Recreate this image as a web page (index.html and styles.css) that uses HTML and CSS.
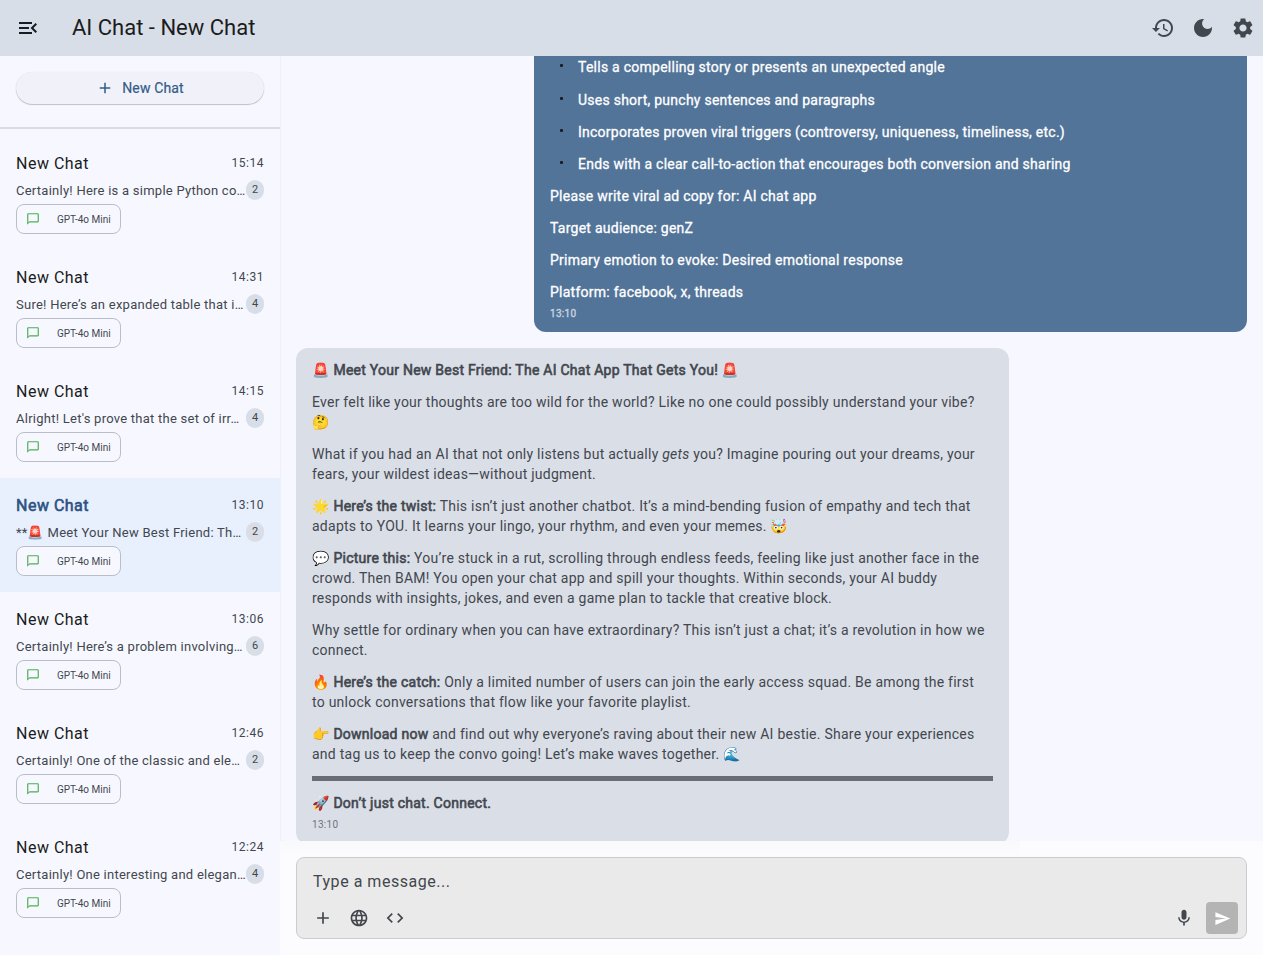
FILE: index.html
```html
<!DOCTYPE html>
<html lang="en">
<head>
<meta charset="utf-8">
<title>AI Chat - New Chat</title>
<link rel="stylesheet" href="styles.css">
</head>
<body>
<svg width="0" height="0" class="defs" aria-hidden="true">
<symbol id="bubble" viewBox="0 0 24 24"><path d="M20 2H4c-1.100 0-2 .9-2 2v18l4-4h14c1.100 0 2-.9 2-2V4c0-1.100-.9-2-2-2zm0 14H6l-2 2V4h16v12z"/></symbol>
<symbol id="plus" viewBox="0 0 24 24"><path d="M19 13h-6v6h-2v-6H5v-2h6V5h2v6h6v2z"/></symbol>
</svg>
<div class="app">
<header class="topbar">
<svg class="i24" viewBox="0 0 24 24"><path d="M3 18h13v-2H3v2zM3 13h10v-2H3v2zM3 6v2h13V6H3zm18 9.590L17.420 12 21 8.410 19.590 7l-5 5 5 5L21 15.590z"/></svg>
<h1>AI Chat - New Chat</h1>
<div class="actions">
<svg class="i24" viewBox="0 0 24 24"><path d="M13 3c-4.970 0-9 4.030-9 9H1l3.890 3.890.07.14L9 12H6c0-3.870 3.130-7 7-7s7 3.130 7 7-3.130 7-7 7c-1.930 0-3.680-.79-4.940-2.060l-1.420 1.420C8.270 19.990 10.510 21 13 21c4.970 0 9-4.030 9-9s-4.030-9-9-9zm-1 5v5l4.280 2.540.72-1.210-3.500-2.080V8H12z"/></svg>
<svg class="i24" viewBox="0 0 24 24"><path d="M12 3c-4.970 0-9 4.030-9 9s4.030 9 9 9 9-4.030 9-9c0-.46-.04-.92-.1-1.360-.98 1.370-2.580 2.260-4.400 2.260-2.980 0-5.400-2.420-5.400-5.400 0-1.810.89-3.420 2.260-4.400-.44-.06-.9-.1-1.360-.1z"/></svg>
<svg class="i24" viewBox="0 0 24 24"><path d="M19.140 12.940c.04-.3.060-.61.060-.94 0-.32-.02-.64-.07-.94l2.030-1.580c.18-.14.23-.41.120-.61l-1.920-3.320c-.12-.22-.37-.29-.59-.22l-2.390.96c-.5-.38-1.030-.7-1.620-.94l-.36-2.540c-.04-.24-.24-.41-.48-.41h-3.840c-.24 0-.43.17-.47.41l-.36 2.540c-.59.24-1.130.57-1.620.94l-2.390-.96c-.22-.08-.47 0-.59.22L2.740 8.870c-.12.21-.08.47.12.61l2.030 1.580c-.05.3-.09.63-.09.94s.02.64.07.94l-2.030 1.580c-.18.14-.23.41-.12.61l1.920 3.320c.12.22.37.29.59.22l2.390-.96c.5.38 1.030.7 1.620.94l.36 2.540c.05.24.24.41.48.41h3.840c.24 0 .44-.17.47-.41l.36-2.540c.59-.24 1.130-.56 1.620-.94l2.390.96c.22.08.47 0 .59-.22l1.920-3.320c.12-.22.07-.47-.12-.61l-2.010-1.580zM12 15.600c-1.980 0-3.600-1.620-3.600-3.600s1.620-3.600 3.600-3.600 3.600 1.620 3.600 3.600-1.620 3.600-3.600 3.600z"/></svg>
</div>
</header>
<div class="body">
<aside class="sidebar">
<div class="new-wrap"><button class="new"><svg class="i18" viewBox="0 0 24 24"><use href="#plus"/></svg>New Chat</button></div>
<div class="item"><div class="row"><b class="name">New Chat</b><span class="at">15:14</span></div><div class="row sub"><span class="prev">Certainly! Here is a simple Python co…</span><span class="badge">2</span></div><div class="chip"><svg viewBox="0 0 24 24"><use href="#bubble"/></svg>GPT-4o Mini</div></div>
<div class="item"><div class="row"><b class="name">New Chat</b><span class="at">14:31</span></div><div class="row sub"><span class="prev">Sure! Here’s an expanded table that i…</span><span class="badge">4</span></div><div class="chip"><svg viewBox="0 0 24 24"><use href="#bubble"/></svg>GPT-4o Mini</div></div>
<div class="item"><div class="row"><b class="name">New Chat</b><span class="at">14:15</span></div><div class="row sub"><span class="prev">Alright! Let's prove that the set of irr…</span><span class="badge">4</span></div><div class="chip"><svg viewBox="0 0 24 24"><use href="#bubble"/></svg>GPT-4o Mini</div></div>
<div class="item active"><div class="row"><b class="name">New Chat</b><span class="at">13:10</span></div><div class="row sub"><span class="prev">**🚨 Meet Your New Best Friend: Th…</span><span class="badge">2</span></div><div class="chip"><svg viewBox="0 0 24 24"><use href="#bubble"/></svg>GPT-4o Mini</div></div>
<div class="item"><div class="row"><b class="name">New Chat</b><span class="at">13:06</span></div><div class="row sub"><span class="prev">Certainly! Here’s a problem involving…</span><span class="badge">6</span></div><div class="chip"><svg viewBox="0 0 24 24"><use href="#bubble"/></svg>GPT-4o Mini</div></div>
<div class="item"><div class="row"><b class="name">New Chat</b><span class="at">12:46</span></div><div class="row sub"><span class="prev">Certainly! One of the classic and ele…</span><span class="badge">2</span></div><div class="chip"><svg viewBox="0 0 24 24"><use href="#bubble"/></svg>GPT-4o Mini</div></div>
<div class="item"><div class="row"><b class="name">New Chat</b><span class="at">12:24</span></div><div class="row sub"><span class="prev">Certainly! One interesting and elegan…</span><span class="badge">4</span></div><div class="chip"><svg viewBox="0 0 24 24"><use href="#bubble"/></svg>GPT-4o Mini</div></div>
</aside>
<main class="main">
<div class="messages">
<div class="msg user">
<ul>
<li>Tells a compelling story or presents an unexpected angle</li>
<li>Uses short, punchy sentences and paragraphs</li>
<li>Incorporates proven viral triggers (controversy, uniqueness, timeliness, etc.)</li>
<li>Ends with a clear call-to-action that encourages both conversion and sharing</li>
</ul>
<p>Please write viral ad copy for: AI chat app</p>
<p>Target audience: genZ</p>
<p>Primary emotion to evoke: Desired emotional response</p>
<p>Platform: facebook, x, threads</p>
<time>13:10</time>
</div>
<div class="msg bot">
<p>🚨 <strong>Meet Your New Best Friend: The AI Chat App That Gets You!</strong> 🚨</p>
<p>Ever felt like your thoughts are too wild for the world? Like no one could possibly understand your vibe?<br>🤔</p>
<p>What if you had an AI that not only listens but actually <em>gets</em> you? Imagine pouring out your dreams, your<br>fears, your wildest ideas—without judgment.</p>
<p>🌟 <strong>Here’s the twist:</strong> This isn’t just another chatbot. It’s a mind-bending fusion of empathy and tech that<br>adapts to YOU. It learns your lingo, your rhythm, and even your memes. 🤯</p>
<p>💬 <strong>Picture this:</strong> You’re stuck in a rut, scrolling through endless feeds, feeling like just another face in the<br>crowd. Then BAM! You open your chat app and spill your thoughts. Within seconds, your AI buddy<br>responds with insights, jokes, and even a game plan to tackle that creative block.</p>
<p>Why settle for ordinary when you can have extraordinary? This isn’t just a chat; it’s a revolution in how we<br>connect.</p>
<p>🔥 <strong>Here’s the catch:</strong> Only a limited number of users can join the early access squad. Be among the first<br>to unlock conversations that flow like your favorite playlist.</p>
<p>👉 <strong>Download now</strong> and find out why everyone’s raving about their new AI bestie. Share your experiences<br>and tag us to keep the convo going! Let’s make waves together. 🌊</p>
<hr>
<p>🚀 <strong>Don’t just chat. Connect.</strong></p>
<time>13:10</time>
</div>
</div>
<div class="composer">
<div class="box">
<div class="ph">Type a message...</div>
<div class="tools">
<svg class="i20" viewBox="0 0 24 24"><use href="#plus"/></svg>
<svg class="i20" viewBox="0 0 24 24"><path d="M11.990 2C6.470 2 2 6.480 2 12s4.470 10 9.990 10C17.520 22 22 17.520 22 12S17.520 2 11.990 2zm6.930 6h-2.950c-.32-1.250-.78-2.450-1.380-3.560 1.840.63 3.370 1.910 4.330 3.560zM12 4.040c.83 1.200 1.480 2.530 1.910 3.960h-3.820c.43-1.430 1.080-2.760 1.910-3.960zM4.260 14C4.100 13.360 4 12.690 4 12s.1-1.360.26-2h3.380c-.08.66-.14 1.320-.14 2s.06 1.340.14 2H4.260zm.82 2h2.950c.32 1.250.78 2.450 1.380 3.560-1.840-.63-3.370-1.900-4.330-3.560zm2.950-8H5.080c.96-1.660 2.490-2.930 4.330-3.560C8.810 5.550 8.350 6.750 8.030 8zM12 19.960c-.83-1.200-1.480-2.530-1.910-3.960h3.820c-.43 1.430-1.080 2.760-1.910 3.960zM14.340 14H9.660c-.09-.66-.16-1.320-.16-2s.07-1.350.16-2h4.680c.09.65.16 1.320.16 2s-.07 1.340-.16 2zm.25 5.560c.6-1.110 1.060-2.310 1.380-3.560h2.950c-.96 1.650-2.490 2.930-4.330 3.560zM16.360 14c.08-.66.140-1.320.140-2s-.06-1.340-.14-2h3.380c.16.64.26 1.310.26 2s-.1 1.360-.26 2h-3.380z"/></svg>
<svg class="i20" viewBox="0 0 24 24"><path d="M9.400 16.600L4.800 12l4.600-4.600L8 6l-6 6 6 6 1.400-1.400zm5.200 0l4.600-4.600-4.600-4.600L16 6l6 6-6 6-1.400-1.400z"/></svg>
<svg class="i20 mic" viewBox="0 0 24 24"><path d="M12 14c1.660 0 2.990-1.340 2.990-3L15 5c0-1.660-1.340-3-3-3S9 3.340 9 5v6c0 1.660 1.340 3 3 3zm5.300-3c0 3-2.540 5.100-5.300 5.100S6.700 14 6.700 11H5c0 3.410 2.720 6.230 6 6.720V21h2v-3.280c3.280-.48 6-3.300 6-6.720h-1.700z"/></svg>
<button class="send"><svg viewBox="0 0 24 24"><path d="M2.010 21L23 12 2.010 3 2 10l15 2-15 2z"/></svg></button>
</div>
</div>
</div>
</main>
</div>
</div>
</body>
</html>
```
FILE: styles.css
```css
* { box-sizing: border-box; margin: 0; padding: 0; }
body { font-family: Roboto, "Noto Color Emoji", sans-serif; color: #191c20; background: #f7f8ff; overflow: hidden; }
.defs { display: block; height: 0; }
svg { fill: currentColor; flex: none; }
.app { height: 955px; display: flex; flex-direction: column; }
.topbar { height: 56px; flex: none; background: #d8dee7; display: flex; align-items: center; padding: 0 8px 0 16px; }
.topbar h1 { font-weight: 400; font-size: 22px; line-height: 28px; margin-left: 32px; }
.i24 { width: 24px; height: 24px; }
.i20 { width: 20px; height: 20px; }
.i18 { width: 18px; height: 18px; }
.actions { margin-left: auto; display: flex; gap: 16px; color: #42474e; }
.body { flex: 1; display: flex; min-height: 0; }
.sidebar { width: 280px; flex: none; overflow: hidden; }
.new-wrap { height: 73px; padding: 16px; border-bottom: 2px solid #d8dce6; margin-bottom: 7px; }
.new { width: 248px; height: 32px; border: 0; border-radius: 16px; background: #f1f2f9; box-shadow: 0 1px 1px rgba(0,0,0,.22), 0 0 1px rgba(0,0,0,.12); color: #345c88; font: 400 14px/20px Roboto, sans-serif; letter-spacing: .15px; -webkit-text-stroke: .2px #345c88; display: flex; align-items: center; justify-content: center; gap: 8px; }
.new svg { stroke: none; }
.item { height: 114px; padding: 15px 16px 0; }
.item.active { background: #e8f0fe; }
.row { display: flex; justify-content: space-between; align-items: center; height: 24px; white-space: nowrap; }
.name { font-weight: 400; font-size: 16px; letter-spacing: .5px; }
.active .name { color: #2c5282; -webkit-text-stroke: .6px #2c5282; }
.at { font-size: 12px; letter-spacing: .5px; color: #42474e; }
.sub { height: 20px; margin-top: 5px; }
.prev { font-size: 13px; letter-spacing: .25px; color: #42474e; }
.badge { flex: none; width: 18px; height: 20px; border-radius: 9px; background: #d8dee7; font-size: 11px; line-height: 20px; text-align: center; color: #42474e; }
.active .badge { background: #dadde6; }
.chip { width: 105px; height: 30px; margin-top: 4px; border: 1px solid #babec9; border-radius: 8px; background: #f7f8ff; font-size: 10px; color: #42474e; display: flex; align-items: center; padding-left: 9px; gap: 17px; white-space: nowrap; }
.chip svg { width: 14px; height: 14px; color: #4caf50; }
.main { flex: 1; min-width: 0; display: flex; flex-direction: column; box-shadow: inset 2px 0 2px -1px #eeeff6; }
.messages { height: 785px; padding: 0 16px; overflow: hidden; display: flex; flex-direction: column; gap: 16px; }
.msg { width: 713px; flex: none; border-radius: 12px; padding: 12px 16px; font-size: 14px; line-height: 20px; letter-spacing: .25px; white-space: nowrap; }
.user { align-self: flex-end; height: 276px; padding-top: 1px; border-radius: 0 0 12px 12px; background: #527499; color: #fff; -webkit-text-stroke: .3px #fff; }
.bot { background: #dadee7; color: #42474e; }
.msg p + p { margin-top: 12px; }
.user ul { list-style: none; }
.user li { padding-left: 28px; margin-bottom: 12px; display: flex; }
.user li:first-child { margin-bottom: 13px; }
.user li::before { content: ""; width: 3px; height: 3px; border-radius: 1px; background: #191c20; margin: 8px 14px 0 -17px; }
.user li::before { margin: 7px 15px 0 -18px; }
.bot strong { font-weight: 400; -webkit-text-stroke: .6px #42474e; }
.bot hr { border: 0; height: 5px; background: #696d76; margin: 12px 0; }
time { display: block; margin-top: 5px; font-size: 10px; line-height: 14px; letter-spacing: .3px; opacity: .7; }
.composer { flex: 1; background: linear-gradient(#f9f9fc, #fcfcff) 0 0 / 740px 16px no-repeat #fcfcff; padding: 16px; }
.box { height: 82px; border: 1px solid #cbccd0; border-radius: 8px; background: #eaeaea; padding: 12px 8px 0 16px; }
.ph { font-size: 16px; line-height: 24px; letter-spacing: .53px; color: #42474e; }
.tools { display: flex; align-items: center; gap: 16px; color: #42474e; height: 32px; margin-top: 8px; }
.mic { margin-left: auto; margin-right: -4px; }
.send { width: 32px; height: 32px; border: 0; border-radius: 4px; background: #b4b4b4; color: #fff; display: grid; place-items: center; }
.send svg { width: 17px; height: 17px; }
```
